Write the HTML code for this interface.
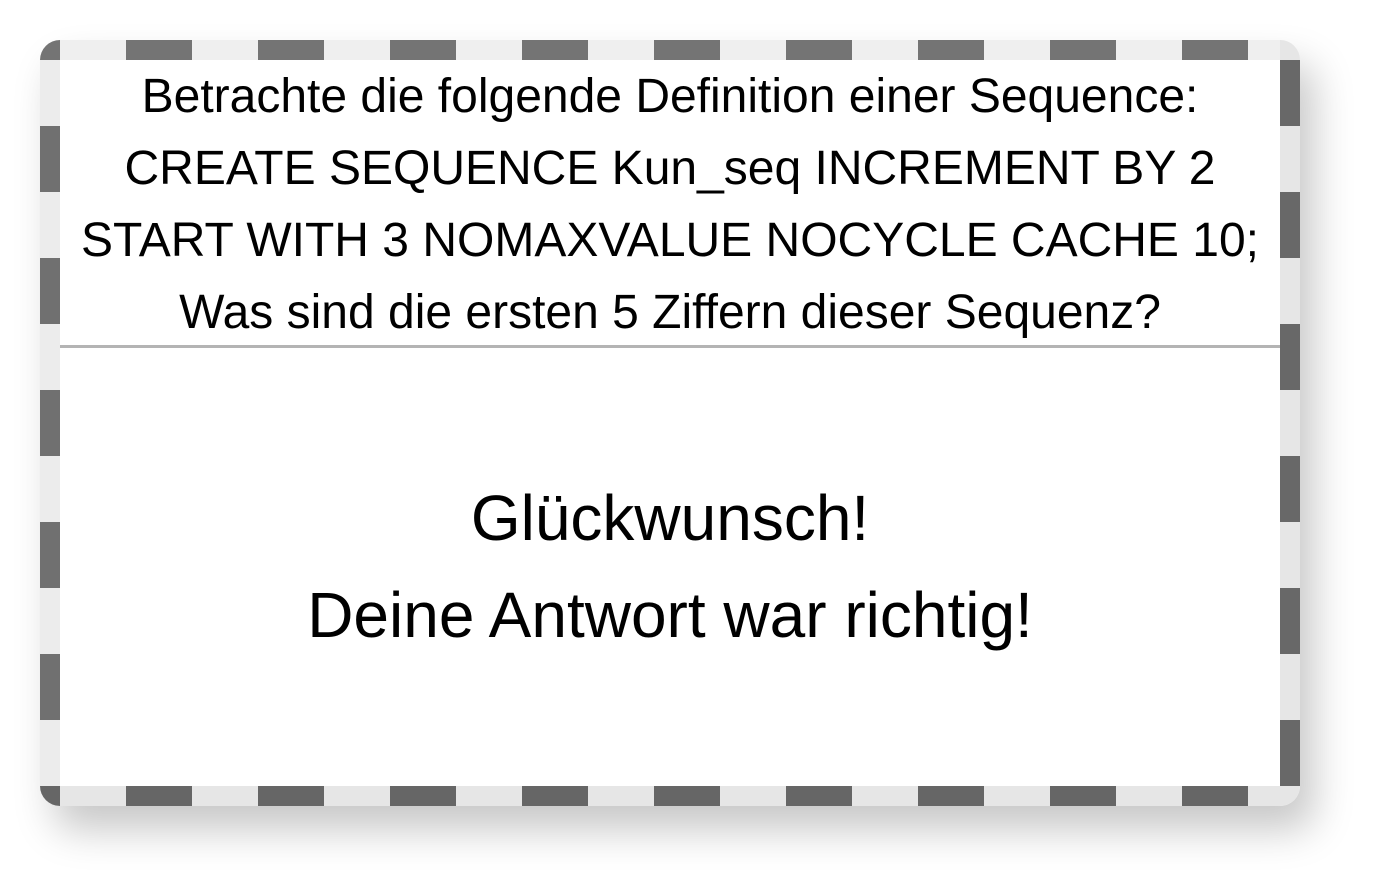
<!DOCTYPE html>
<html><head><style>
html,body{margin:0;padding:0;background:#fff;width:1380px;height:886px;overflow:hidden;font-family:"Liberation Sans",sans-serif;}
.card{position:absolute;left:40px;top:40px;width:1260px;height:766px;border-radius:20px;overflow:hidden;box-shadow:14px 24px 40px rgba(0,0,0,0.22);background:#fff;}
.e{position:absolute;}
.top{left:0;top:0;width:1260px;height:20px;background:linear-gradient(to right,#efefef 0 66px,#747474 66px 132px);background-size:132px 20px;background-position:20px 0;}
.bot{left:0;top:746px;width:1260px;height:20px;background:linear-gradient(to right,#e6e6e6 0 66px,#666 66px 132px);background-size:132px 20px;background-position:20px 0;}
.lef{left:0;top:20px;width:20px;height:726px;background:linear-gradient(to bottom,#ececec 0 66px,#707070 66px 132px);background-size:20px 132px;}
.rig{left:1240px;top:0;width:20px;height:746px;background:linear-gradient(to bottom,#686868 0 66px,#e6e6e6 66px 132px);background-size:20px 132px;background-position:0 20px;}
.q{position:absolute;left:20px;top:21px;width:1220px;text-align:center;font-size:48px;line-height:72px;color:#000;white-space:nowrap;}
.sep{position:absolute;left:20px;top:305px;width:1220px;height:3px;background:#b4b4b4;}
.a{position:absolute;left:20px;top:308px;width:1220px;height:438px;display:flex;flex-direction:column;justify-content:center;align-items:center;font-size:64px;line-height:97px;color:#000;}
</style></head><body>
<div class="card">
<div class="e top"></div><div class="e bot"></div><div class="e lef"></div><div class="e rig"></div>
<div class="q">Betrachte die folgende Definition einer Sequence:<br>CREATE SEQUENCE Kun_seq INCREMENT BY 2<br>START WITH 3 NOMAXVALUE NOCYCLE CACHE 10;<br>Was sind die ersten 5 Ziffern dieser Sequenz?</div>
<div class="sep"></div>
<div class="a"><div>Glückwunsch!</div><div>Deine Antwort war richtig!</div></div>
</div>
</body></html>
